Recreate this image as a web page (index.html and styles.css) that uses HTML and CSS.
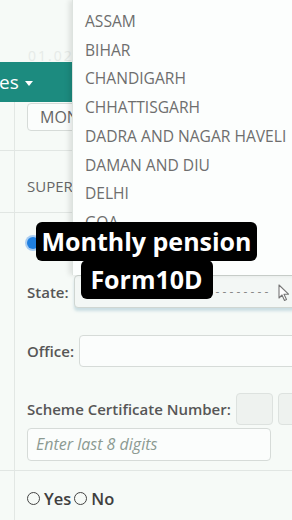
FILE: index.html
```html
<!DOCTYPE html>
<html>
<head>
<meta charset="utf-8">
<link rel="stylesheet" href="styles.css">
</head>
<body>
<div class="screen">
  <div class="topstrip"><span class="faint">01.02</span></div>
  <div class="navbar"><span class="navtext">es</span><span class="caret"></span></div>
  <div class="content">
    <div class="mon-input">MON</div>
    <div class="rule rule-a"></div>
    <div class="super">SUPER</div>
    <div class="rule rule-b"></div>
    <div class="radio-row"><span class="radio-on"></span></div>
    <div class="field-row state-row">
      <span class="label">State:</span>
      <div class="select"><span class="dashes">- - - - - - - - -</span></div>
    </div>
    <div class="field-row office-row">
      <span class="label">Office:</span>
      <div class="textbox"></div>
    </div>
    <div class="scheme-row">
      <span class="label">Scheme Certificate Number:</span>
      <span class="mini"></span>
      <span class="mini"></span>
    </div>
    <div class="digits">Enter last 8 digits</div>
    <div class="rule rule-c"></div>
    <div class="yesno">
      <span class="radio-off"></span><span class="opt">Yes</span>
      <span class="radio-off"></span><span class="opt">No</span>
    </div>
  </div>

  <ul class="dropdown">
    <li>ASSAM</li>
    <li>BIHAR</li>
    <li>CHANDIGARH</li>
    <li>CHHATTISGARH</li>
    <li>DADRA AND NAGAR HAVELI</li>
    <li>DAMAN AND DIU</li>
    <li>DELHI</li>
    <li>GOA</li>
  </ul>

  <div class="caption">
    <span class="cap-line cap-1">Monthly pension</span>
    <span class="cap-line cap-2">Form10D</span>
  </div>

  <svg class="cursor" width="12" height="18" viewBox="0 0 12 18">
    <path d="M1 1 L1 14 L4 11 L6.5 16.5 L8.5 15.6 L6 10.2 L10.5 10.2 Z" fill="#ffffff" stroke="#777" stroke-width="1.1" stroke-linejoin="round"/>
  </svg>
</div>
</body>
</html>
```

FILE: styles.css
```css
* { box-sizing: border-box; }
html, body {
  margin: 0;
  padding: 0;
}
body {
  width: 292px;
  height: 520px;
  overflow: hidden;
  background: #f6faf7;
  font-family: "Open Sans", "Liberation Sans", sans-serif;
}
.screen {
  position: relative;
  width: 292px;
  height: 520px;
  overflow: hidden;
}
.topstrip {
  height: 62px;
  padding: 44px 0 0 28px;
}
.faint {
  font-size: 14px;
  color: #e6ebe8;
  letter-spacing: 2px;
}
.navbar {
  height: 40px;
  background: #1c8b7f;
  display: flex;
  align-items: center;
  padding-left: 0;
  gap: 6px;
}
.navtext {
  color: #ffffff;
  font-size: 19px;
  margin-left: -1px;
}
.caret {
  width: 0;
  height: 0;
  border-left: 4px solid transparent;
  border-right: 4px solid transparent;
  border-top: 5px solid #ffffff;
  margin-top: 2px;
}
.content {
  margin-left: 14px;
  border-left: 1px solid #e2e7e4;
  padding-left: 12px;
  height: 418px;
  display: flex;
  flex-direction: column;
}
.mon-input {
  margin-top: 1px;
  height: 28px;
  width: 300px;
  border: 1px solid #d6dbd8;
  border-radius: 4px;
  background: #fbfdfc;
  color: #666;
  font-size: 16px;
  padding-left: 12px;
  line-height: 26px;
}
.rule {
  height: 1px;
  background: #e1e6e3;
  margin-left: -27px;
  width: 320px;
}
.rule-a { margin-top: 19px; }
.super {
  margin-top: 25px;
  font-size: 15px;
  line-height: 20px;
  color: #666;
}
.rule-b { margin-top: 16px; }
.radio-row {
  margin-top: 24px;
  height: 12px;
  display: flex;
}
.radio-on {
  width: 12px;
  height: 12px;
  border-radius: 50%;
  background: #1f7fe0;
  box-shadow: 0 0 0 2px #a9cdf2;
}
.field-row {
  display: flex;
  align-items: center;
  gap: 5px;
}
.label {
  font-size: 15px;
  font-weight: 600;
  color: #565656;
  white-space: nowrap;
}
.state-row { margin-top: 26px; }
.select {
  flex: 1;
  height: 33px;
  border: 1px solid #cfd6d2;
  border-radius: 4px;
  background: #f3f7f5;
  box-shadow: 0 3px 3px rgba(120, 170, 190, 0.35);
  display: flex;
  align-items: center;
  padding-left: 134px;
  margin-right: -4px;
}
.dashes {
  color: #888;
  font-size: 12px;
  letter-spacing: 0px;
}
.office-row { margin-top: 27px; }
.textbox {
  flex: 1;
  height: 32px;
  border: 1px solid #d6dbd8;
  border-radius: 4px;
  background: #fbfdfc;
  margin-right: -4px;
}
.scheme-row {
  margin-top: 26px;
  display: flex;
  align-items: center;
  gap: 5px;
  height: 32px;
}
.mini {
  flex: none;
  width: 37px;
  height: 32px;
  border: 1px solid #dde2df;
  border-radius: 4px;
  background: #eef2ef;
}
.digits {
  margin-top: 3px;
  width: 244px;
  height: 33px;
  border: 1px solid #d6dbd8;
  border-radius: 4px;
  background: #fbfdfc;
  font-style: italic;
  font-size: 16px;
  color: #8c9a92;
  padding-left: 8px;
  line-height: 31px;
}
.rule-c { margin-top: 9px; }
.yesno {
  margin-top: 17px;
  display: flex;
  align-items: center;
  height: 20px;
}
.radio-off {
  width: 13px;
  height: 13px;
  border: 1px solid #444;
  border-radius: 50%;
  margin-right: 4px;
}
.opt {
  font-size: 16.5px;
  font-weight: 600;
  color: #3f3f3f;
  margin-right: 3px;
}
.dropdown {
  position: absolute;
  left: 72px;
  top: 0;
  width: 226px;
  height: 275px;
  margin: 0;
  padding: 7px 0 0 12px;
  list-style: none;
  background: #fcfefd;
  border-left: 1px solid #dde3df;
  box-shadow: -3px 0 5px rgba(0, 0, 0, 0.10);
}
.dropdown li {
  font-size: 15.6px;
  line-height: 28.7px;
  color: #6e6e6e;
  white-space: nowrap;
}
.caption {
  position: absolute;
  left: 36px;
  top: 222px;
  width: 221px;
  display: flex;
  flex-direction: column;
  align-items: center;
}
.cap-line {
  background: #000;
  color: #fff;
  font-family: "Open Sans", "Liberation Sans", sans-serif;
  font-weight: 700;
  font-size: 25px;
  line-height: 39px;
  border-radius: 6px;
  white-space: nowrap;
  text-align: center;
}
.cap-1 { width: 221px; }
.cap-2 { width: 132px; margin-top: -1px; }
.cursor {
  position: absolute;
  left: 278px;
  top: 284px;
}
```
